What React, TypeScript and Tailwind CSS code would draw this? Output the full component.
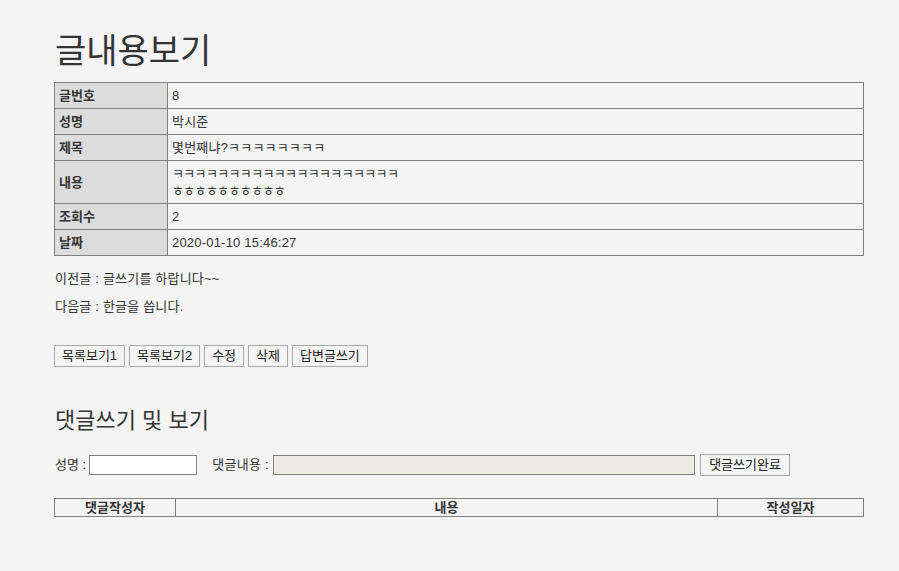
const font = { fontFamily: '"Liberation Sans", "Noto Sans CJK KR", sans-serif' }

const rows = [
  { label: '글번호', value: ['8'] },
  { label: '성명', value: ['박시준'] },
  { label: '제목', value: ['몇번째냐?ㅋㅋㅋㅋㅋㅋㅋㅋ'] },
  { label: '내용', value: ['ㅋㅋㅋㅋㅋㅋㅋㅋㅋㅋㅋㅋㅋㅋㅋㅋㅋㅋㅋㅋ', 'ㅎㅎㅎㅎㅎㅎㅎㅎㅎㅎ'] },
  { label: '조회수', value: ['2'] },
  { label: '날짜', value: ['2020-01-10 15:46:27'] },
]

const buttons = ['목록보기1', '목록보기2', '수정', '삭제', '답변글쓰기']

export default function App() {
  return (
    <div className="min-h-[571px] bg-[#f4f4f4] text-[#333] text-[13px]" style={font}>
      <div className="ml-[54px] w-[810px] pt-[30px]">
        {/* Title */}
        <h1 className="text-[34px] leading-[42px] pl-[1px] mb-[10px]">글내용보기</h1>

        {/* Post detail table */}
        <table className="w-full border-collapse border border-[#808080]">
          <tbody>
            {rows.map((r) => (
              <tr key={r.label}>
                <th className="w-[113px] bg-[#dcdcdc] border border-[#808080] text-left font-bold px-[4px] py-[4px] leading-[17px]">
                  {r.label}
                </th>
                <td className="border border-[#808080] px-[4px] py-[4px] leading-[17px]">
                  {r.value.map((v) => (
                    <div key={v} className={r.label === '내용' ? 'tracking-[-0.65px]' : 'tracking-[0.2px]'}>
                      {v}
                    </div>
                  ))}
                </td>
              </tr>
            ))}
          </tbody>
        </table>

        {/* Prev / next */}
        <p className="mt-[14px] pl-[1px] leading-[17px] tracking-[0.2px]">이전글 : 글쓰기를 하랍니다~~</p>
        <p className="mt-[11px] pl-[1px] leading-[17px] tracking-[0.2px]">다음글 : 한글을 씁니다.</p>

        {/* Action buttons */}
        <div className="mt-[30px] flex gap-[4px]">
          {buttons.map((b) => (
            <button
              key={b}
              className="h-[22px] px-[7px] border border-[#a9a9a9] bg-[#f4f4f4] leading-[20px] text-[#222]"
            >
              {b}
            </button>
          ))}
        </div>

        {/* Comment section */}
        <h2 className="mt-[39px] text-[22px] leading-[30px] pl-[1px]">댓글쓰기 및 보기</h2>

        <div className="mt-[18px] flex items-center h-[22px]">
          <span className="pl-[1px]">성명 :</span>
          <input className="ml-[3px] w-[108px] h-[20px] bg-white border border-[#808080]" />
          <span className="ml-[15px] tracking-[0.3px]">댓글내용 :</span>
          <input
            disabled
            className="ml-[4px] w-[422px] h-[20px] bg-[#ebebe4] border border-[#808080]"
          />
          <button className="ml-[5px] h-[22px] w-[90px] border border-[#a9a9a9] bg-[#f4f4f4] text-[#222] leading-[20px]">
            댓글쓰기완료
          </button>
        </div>

        <table className="mt-[22px] w-full border-collapse border border-[#808080]">
          <thead>
            <tr>
              <th className="w-[121px] border border-[#808080] font-bold leading-[17px]">댓글작성자</th>
              <th className="border border-[#808080] font-bold leading-[17px]">내용</th>
              <th className="w-[146px] border border-[#808080] font-bold leading-[17px]">작성일자</th>
            </tr>
          </thead>
        </table>
      </div>
    </div>
  )
}
